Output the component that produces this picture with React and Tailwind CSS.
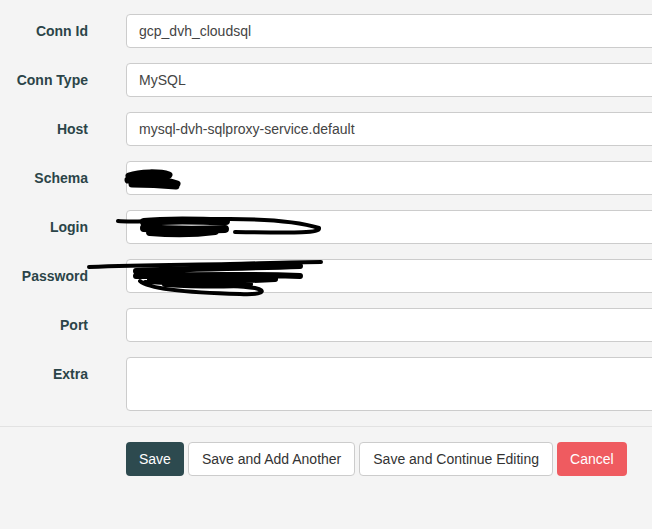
import React from 'react';

const fields = [
  { label: 'Conn Id', value: 'gcp_dvh_cloudsql' },
  { label: 'Conn Type', value: 'MySQL' },
  { label: 'Host', value: 'mysql-dvh-sqlproxy-service.default' },
  { label: 'Schema', value: '' },
  { label: 'Login', value: '' },
  { label: 'Password', value: '' },
  { label: 'Port', value: '' },
];

const Field = ({ label, value }) => (
  <div className="flex items-center">
    <label className="w-[88px] shrink-0 text-right text-[14px] font-bold text-[#2b4448]">{label}</label>
    <div className="ml-[38px] w-[540px] h-[34px] shrink-0 flex items-center px-[12px] bg-white border border-[#cccccc] rounded-[4px] text-[14px] text-[#444]">
      {value}
    </div>
  </div>
);

// redaction scribbles drawn over the form
const Scribbles = () => (
  <svg className="absolute inset-0 pointer-events-none" width="652" height="529" viewBox="0 0 652 529">
    <g fill="none" stroke="#000" strokeLinecap="round" strokeLinejoin="round">
      {/* schema */}
      <path d="M129 176 C140 172 160 172 169 175 M128 180 C145 178 165 179 177 184 M132 184 C145 184 165 185 176 186" strokeWidth="7" />
      {/* login */}
      <path d="M118 221 C140 223 170 219 230 219 C270 219 300 222 319 228 C320 233 300 233 235 232" strokeWidth="4" />
      <path d="M144 222 C170 219 200 221 226 221 M144 228 C170 230 200 230 225 229 M150 232 C175 234 200 233 215 231" strokeWidth="8" />
      {/* password */}
      <path d="M89 267 C140 265 180 265 230 264 C270 263 300 262 321 262" strokeWidth="4" />
      <path d="M136 271 C180 269 240 268 300 266 M136 276 C180 275 240 274 300 276 M150 280 C200 281 240 281 275 279 M165 284 C200 286 230 286 250 284" strokeWidth="6" />
      <path d="M140 281 C150 290 200 293 240 294 C262 295 268 291 255 288 C230 284 190 284 145 282" strokeWidth="4" />
    </g>
  </svg>
);

export default function App() {
  return (
    <div className="relative w-[652px] h-[529px] overflow-hidden bg-[#f4f4f4] font-['Liberation_Sans',Arial,sans-serif]">
      <div className="pt-[14px] flex flex-col gap-[15px]">
        {fields.map((f) => (
          <Field key={f.label} {...f} />
        ))}
        <div className="flex items-start">
          <label className="w-[88px] shrink-0 pt-[7px] leading-[20px] text-right text-[14px] font-bold text-[#2b4448]">Extra</label>
          <div className="ml-[38px] w-[540px] h-[54px] shrink-0 bg-white border border-[#cccccc] rounded-[4px]" />
        </div>
      </div>
      <div className="mt-[15px] border-t border-[#e2e2e2]" />
      <div className="mt-[15px] pl-[126px] flex gap-[4px] text-[14px]">
        <button className="h-[34px] px-[13px] rounded-[4px] bg-[#2d4a4f] text-white">Save</button>
        <button className="h-[34px] px-[13px] rounded-[4px] bg-white border border-[#cccccc] text-[#333]">Save and Add Another</button>
        <button className="h-[34px] px-[13px] rounded-[4px] bg-white border border-[#cccccc] text-[#333]">Save and Continue Editing</button>
        <button className="h-[34px] px-[13px] rounded-[4px] bg-[#ef5b60] text-white">Cancel</button>
      </div>
      <Scribbles />
    </div>
  );
}
